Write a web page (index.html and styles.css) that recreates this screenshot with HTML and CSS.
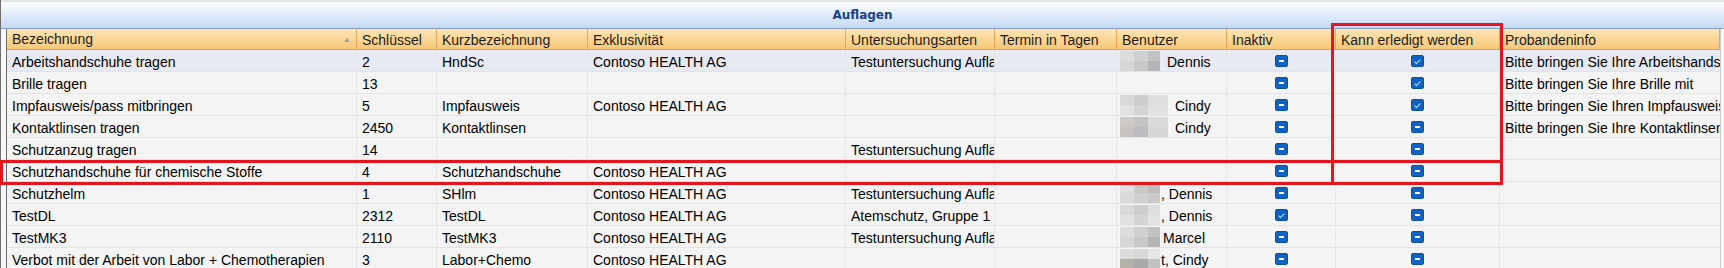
FILE: index.html
```html
<!DOCTYPE html>
<html>
<head>
    <meta charset="UTF-8">
    <title>Auflagen</title>
    <link rel="stylesheet" href="styles.css">
</head>
<body>
    <div class="panel">
        <div class="title">Auflagen</div>

        <div class="grid">
            <div class="row head">
                <div class="cell sorted">Bezeichnung<span class="sort"></span></div>
                <div class="cell">Schlüssel</div>
                <div class="cell">Kurzbezeichnung</div>
                <div class="cell">Exklusivität</div>
                <div class="cell">Untersuchungsarten</div>
                <div class="cell">Termin in Tagen</div>
                <div class="cell">Benutzer</div>
                <div class="cell">Inaktiv</div>
                <div class="cell">Kann erledigt werden</div>
                <div class="cell">Probandeninfo</div>
            </div>

            <div class="row sel">
                <div class="cell">Arbeitshandschuhe tragen</div>
                <div class="cell">2</div>
                <div class="cell">HndSc</div>
                <div class="cell">Contoso HEALTH AG</div>
                <div class="cell clip">Testuntersuchung Auflagen</div>
                <div class="cell"></div>
                <div class="cell user"><span class="blur b1"></span><span class="name gap">Dennis</span></div>
                <div class="cell mid"><span class="cb off"></span></div>
                <div class="cell mid"><span class="cb on"></span></div>
                <div class="cell clip">Bitte bringen Sie Ihre Arbeitshandschuhe mit</div>
            </div>

            <div class="row">
                <div class="cell">Brille tragen</div>
                <div class="cell">13</div>
                <div class="cell"></div>
                <div class="cell"></div>
                <div class="cell"></div>
                <div class="cell"></div>
                <div class="cell user"></div>
                <div class="cell mid"><span class="cb off"></span></div>
                <div class="cell mid"><span class="cb on"></span></div>
                <div class="cell clip">Bitte bringen Sie Ihre Brille mit</div>
            </div>

            <div class="row">
                <div class="cell">Impfausweis/pass mitbringen</div>
                <div class="cell">5</div>
                <div class="cell">Impfausweis</div>
                <div class="cell">Contoso HEALTH AG</div>
                <div class="cell"></div>
                <div class="cell"></div>
                <div class="cell user"><span class="blur wide b2"></span><span class="name gap">Cindy</span></div>
                <div class="cell mid"><span class="cb off"></span></div>
                <div class="cell mid"><span class="cb on"></span></div>
                <div class="cell clip">Bitte bringen Sie Ihren Impfausweis mit</div>
            </div>

            <div class="row">
                <div class="cell">Kontaktlinsen tragen</div>
                <div class="cell">2450</div>
                <div class="cell">Kontaktlinsen</div>
                <div class="cell"></div>
                <div class="cell"></div>
                <div class="cell"></div>
                <div class="cell user"><span class="blur wide b3"></span><span class="name gap">Cindy</span></div>
                <div class="cell mid"><span class="cb off"></span></div>
                <div class="cell mid"><span class="cb off"></span></div>
                <div class="cell clip">Bitte bringen Sie Ihre Kontaktlinsen mit</div>
            </div>

            <div class="row">
                <div class="cell">Schutzanzug tragen</div>
                <div class="cell">14</div>
                <div class="cell"></div>
                <div class="cell"></div>
                <div class="cell clip">Testuntersuchung Auflagen</div>
                <div class="cell"></div>
                <div class="cell user"></div>
                <div class="cell mid"><span class="cb off"></span></div>
                <div class="cell mid"><span class="cb off"></span></div>
                <div class="cell"></div>
            </div>

            <div class="row">
                <div class="cell">Schutzhandschuhe für chemische Stoffe</div>
                <div class="cell">4</div>
                <div class="cell">Schutzhandschuhe</div>
                <div class="cell">Contoso HEALTH AG</div>
                <div class="cell"></div>
                <div class="cell"></div>
                <div class="cell user"></div>
                <div class="cell mid"><span class="cb off"></span></div>
                <div class="cell mid"><span class="cb off"></span></div>
                <div class="cell"></div>
            </div>

            <div class="row">
                <div class="cell">Schutzhelm</div>
                <div class="cell">1</div>
                <div class="cell">SHlm</div>
                <div class="cell">Contoso HEALTH AG</div>
                <div class="cell clip">Testuntersuchung Auflagen</div>
                <div class="cell"></div>
                <div class="cell user"><span class="blur b4"></span><span class="name">, Dennis</span></div>
                <div class="cell mid"><span class="cb off"></span></div>
                <div class="cell mid"><span class="cb off"></span></div>
                <div class="cell"></div>
            </div>

            <div class="row">
                <div class="cell">TestDL</div>
                <div class="cell">2312</div>
                <div class="cell">TestDL</div>
                <div class="cell">Contoso HEALTH AG</div>
                <div class="cell clip">Atemschutz, Gruppe 1</div>
                <div class="cell"></div>
                <div class="cell user"><span class="blur b2"></span><span class="name">, Dennis</span></div>
                <div class="cell mid"><span class="cb on"></span></div>
                <div class="cell mid"><span class="cb off"></span></div>
                <div class="cell"></div>
            </div>

            <div class="row">
                <div class="cell">TestMK3</div>
                <div class="cell">2110</div>
                <div class="cell">TestMK3</div>
                <div class="cell">Contoso HEALTH AG</div>
                <div class="cell clip">Testuntersuchung Auflagen</div>
                <div class="cell"></div>
                <div class="cell user"><span class="blur b1"></span><span class="name small-gap">Marcel</span></div>
                <div class="cell mid"><span class="cb off"></span></div>
                <div class="cell mid"><span class="cb off"></span></div>
                <div class="cell"></div>
            </div>

            <div class="row">
                <div class="cell">Verbot mit der Arbeit von Labor + Chemotherapien</div>
                <div class="cell">3</div>
                <div class="cell">Labor+Chemo</div>
                <div class="cell">Contoso HEALTH AG</div>
                <div class="cell"></div>
                <div class="cell"></div>
                <div class="cell user"><span class="blur b5"></span><span class="name">t, Cindy</span></div>
                <div class="cell mid"><span class="cb off"></span></div>
                <div class="cell mid"><span class="cb off"></span></div>
                <div class="cell"></div>
            </div>
        </div>
    </div>

    <!-- red highlight boxes drawn over the grid -->
    <div class="mark mark-col"></div>
    <div class="mark mark-row"></div>
</body>
</html>
```

FILE: styles.css
```css
* {
    margin: 0;
    padding: 0;
    box-sizing: border-box;
}

body {
    position: relative;
    width: 1724px;
    height: 268px;
    overflow: hidden;
    background: #f6f6f6;
    font-family: "Liberation Sans", Arial, sans-serif;
    font-size: 14px;
    color: #000;
}

.panel {
    height: 268px;
    border-left: 1px solid #6f6f6f;
    padding-top: 2px;
    background: linear-gradient(#e4e4e4 0 2px, #f7f7f7 2px);
}

.title {
    height: 27px;
    line-height: 26px;
    border-bottom: 1px solid #8d9fb7;
    background: linear-gradient(#fdfeff, #c4d9f5);
    text-align: center;
    font-family: "DejaVu Sans", Verdana, sans-serif;
    font-weight: bold;
    font-size: 12px;
    color: #15428b;
}

.grid {
    width: 1715px;
    margin-left: 5px;
    border-left: 1px solid #6a6a6a;
    border-right: 1px solid #cfcfcf;
}

.row {
    display: grid;
    grid-template-columns: 350px 80px 151px 258px 149px 122px 110px 109px 164px 220px;
    height: 22px;
    background: #f4f4f4;
    border-bottom: 1px solid #e4e4e4;
}

.row.sel {
    background: #e8eaf3;
}

.cell {
    padding-left: 5px;
    line-height: 24px;
    white-space: nowrap;
    overflow: hidden;
    border-right: 1px solid #e6e6e6;
}

.cell:last-child {
    border-right: 0;
}

.row.head {
    height: 21px;
    background: linear-gradient(#fde5b6, #f8c878);
    border-bottom: 1px solid #f09c3a;
}

.head .cell {
    line-height: 22px;
    color: #1c1c1c;
    border-right: 1px solid #eda55a;
}

.head .sorted {
    display: flex;
    align-items: center;
    justify-content: space-between;
    padding-right: 6px;
}

.sort {
    width: 0;
    height: 0;
    border-left: 3px solid transparent;
    border-right: 3px solid transparent;
    border-bottom: 4px solid #a3a3a3;
    margin-top: 1px;
}

.mid {
    display: flex;
    align-items: center;
    justify-content: center;
    padding-left: 0;
    padding-top: 1px;
}

.cb {
    position: relative;
    width: 13px;
    height: 12px;
    border: 1px solid #0b4f9f;
    border-radius: 2px;
    background: #0f64c3;
}

.cb.off::after {
    content: "";
    position: absolute;
    left: 3px;
    top: 4px;
    width: 5px;
    height: 2px;
    background: #fff;
}

.cb.on::after {
    content: "";
    position: absolute;
    left: 4px;
    top: 2px;
    width: 2px;
    height: 5px;
    border-right: 1px solid #c9dbf3;
    border-bottom: 1px solid #c9dbf3;
    transform: rotate(45deg);
}

.user {
    display: flex;
    align-items: center;
    padding-left: 3px;
}

.user .name {
    line-height: 24px;
    margin-top: 2px;
}

.blur {
    flex: none;
    width: 40px;
    height: 20px;
    margin-top: 1px;
}

.blur.wide {
    width: 48px;
}

.b1 {
    background:
        linear-gradient(90deg, #dcdcdc 0 14px, #d0d0d0 14px 28px, #c2c2c3 28px) top / 100% 50% no-repeat,
        linear-gradient(90deg, #d6d6d6 0 14px, #c8c8c8 14px 28px, #b5b5b7 28px) bottom / 100% 50% no-repeat;
}

.b2 {
    background:
        linear-gradient(90deg, #d9d9d9 0 14px, #cdcdcd 14px 28px, #dedede 28px) top / 100% 50% no-repeat,
        linear-gradient(90deg, #e1e1e1 0 14px, #d4d4d4 14px 28px, #e2e2e2 28px) bottom / 100% 50% no-repeat;
}

.b3 {
    background:
        linear-gradient(90deg, #cdc9c6 0 14px, #c3c3c5 14px 28px, #dadada 28px) top / 100% 50% no-repeat,
        linear-gradient(90deg, #c7c3c0 0 14px, #babcc0 14px 28px, #d6d6d6 28px) bottom / 100% 50% no-repeat;
}

.b4 {
    background:
        linear-gradient(90deg, #e0e0e0 0 14px, #c9c9c9 14px 28px, #bdbdbd 28px) top / 100% 50% no-repeat,
        linear-gradient(90deg, #dadada 0 14px, #d0d0d0 14px 28px, #cacaca 28px) bottom / 100% 50% no-repeat;
}

.b5 {
    background:
        linear-gradient(90deg, #dcdcdc 0 14px, #d8d8d8 14px 28px, #e6e6e6 28px) top / 100% 50% no-repeat,
        linear-gradient(90deg, #b4b0aa 0 14px, #a9a9ab 14px 28px, #c2c2c2 28px) bottom / 100% 50% no-repeat;
}

.name {
    margin-left: 1px;
}

.name.gap {
    margin-left: 7px;
}

.name.small-gap {
    margin-left: 3px;
}

.mark {
    position: absolute;
    border: 3px solid #e5151f;
}

.mark-col {
    left: 1331px;
    top: 23px;
    width: 172px;
    height: 162px;
}

.mark-row {
    left: 0;
    top: 160px;
    width: 1503px;
    height: 25px;
}
```
